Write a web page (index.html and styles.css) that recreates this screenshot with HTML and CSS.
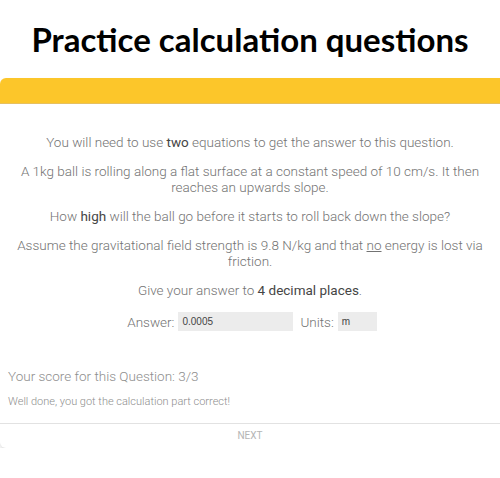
FILE: index.html
```html
<!DOCTYPE html>
<html>
<head>
<meta charset="utf-8">
<link rel="stylesheet" href="styles.css">
</head>
<body>
<h1 class="title">Practice calculation questions</h1>
<div class="card">
  <div class="card-head"></div>
  <div class="question">
    <p>You will need to use <b>two</b> equations to get the answer to this question.</p>
    <p>A 1kg ball is rolling along a flat surface at a constant speed of 10 cm/s. It then reaches an upwards slope.</p>
    <p>How <b>high</b> will the ball go before it starts to roll back down the slope?</p>
    <p>Assume the gravitational field strength is 9.8 N/kg and that <u>no</u> energy is lost via friction.</p>
    <p>Give your answer to <b>4 decimal places</b>.</p>
    <div class="answer-row">
      <span>Answer:</span><span class="input wide">0.0005</span>
      <span class="units">Units:</span><span class="input narrow">m</span>
    </div>
  </div>
  <div class="result">
    <div class="score">Your score for this Question: 3/3</div>
    <div class="feedback">Well done, you got the calculation part correct!</div>
  </div>
  <div class="card-foot">NEXT</div>
</div>
</body>
</html>
```
FILE: styles.css
```css
html, body { margin: 0; padding: 0; background: #fff; }
body { width: 500px; }
.title {
  margin: 0;
  padding-top: 20px;
  height: 78px;
  box-sizing: border-box;
  text-align: center;
  font-family: Lato, "Open Sans", sans-serif;
  font-weight: 700;
  font-size: 33px;
  line-height: 38px;
  color: #000;
}
.card {
  border-radius: 6px 0 0 6px;
  background: #fff;
  box-shadow: 0 3px 4px rgba(0,0,0,0.13);
  overflow: hidden;
}
.card-head {
  height: 25px;
  background: #fcc62a;
  border-bottom: 1px solid #e6c060;
}
.question {
  padding: 30px 8px 0;
  display: flex;
  flex-direction: column;
  gap: 13px;
  font-family: Roboto, sans-serif;
  font-weight: 300;
  font-size: 13.5px;
  line-height: 16px;
  color: #737373;
  text-align: center;
}
.question p { margin: 0; }
.question b { font-weight: 400; color: #454545; }
.answer-row {
  display: flex;
  justify-content: center;
  align-items: center;
  gap: 4px;
  margin-top: 1px;
  padding-left: 4px;
}
.units { margin-left: 3px; }
.input {
  background: #ececec;
  height: 19px;
  box-sizing: border-box;
  padding: 3px 4px 0;
  font-family: "Liberation Sans", Arial, sans-serif;
  font-weight: 400;
  font-size: 10px;
  line-height: 14px;
  color: #444;
  text-align: left;
}
.wide { width: 115px; }
.narrow { width: 39px; }
.result {
  padding: 37px 8px 0;
  font-family: Roboto, sans-serif;
  font-weight: 300;
  color: #8e8e8e;
}
.score { font-size: 13.5px; line-height: 16px; }
.feedback { font-size: 11px; line-height: 14px; margin-top: 11px; }
.card-foot {
  margin-top: 14px;
  border-top: 1px solid #e2e2e2;
  height: 25px;
  box-sizing: border-box;
  text-align: center;
  font-family: Roboto, sans-serif;
  font-weight: 400;
  font-size: 10px;
  line-height: 24px;
  color: #b5b5b5;
}
```
